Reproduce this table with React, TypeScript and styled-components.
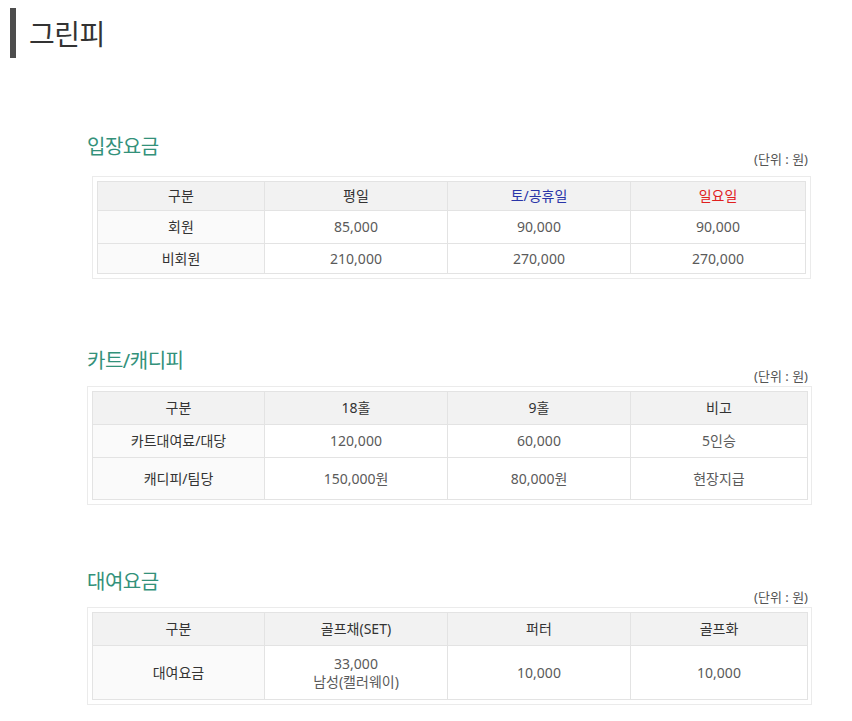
import React from 'react';
import styled, { createGlobalStyle } from 'styled-components';

const GlobalStyle = createGlobalStyle`
  html, body {
    margin: 0;
    padding: 0;
    background: #fff;
  }
  body {
    font-family: "Noto Sans", "Noto Sans CJK KR", sans-serif;
    color: #333;
  }
`;

const Page = styled.div`
  width: 852px;
  padding-bottom: 16px;
`;

const PageTitle = styled.h2`
  margin: 8px 0 0 10px;
  height: 50px;
  border-left: 6px solid #4d4d4d;
  padding-left: 13px;
  display: flex;
  align-items: center;
  font-size: 28px;
  font-weight: 400;
  color: #333;
  letter-spacing: -0.5px;
`;

const Content = styled.div`
  margin-left: 87px;
  width: 725px;
`;

const Section = styled.section<{ $top: number }>`
  margin-top: ${p => p.$top}px;
`;

const SectionTitle = styled.h3`
  margin: 0;
  font-size: 20px;
  line-height: 24px;
  font-weight: 400;
  color: #33917a;
  letter-spacing: -0.5px;
`;

const UnitNote = styled.p<{ $pull: number }>`
  margin: ${p => -p.$pull}px 4px 0 0;
  text-align: right;
  font-size: 13px;
  line-height: 18px;
  color: #555;
`;

const TableBox = styled.div<{ $gap: number; $inset?: boolean }>`
  margin-top: ${p => p.$gap}px;
  margin-left: ${p => (p.$inset ? 5 : 0)}px;
  margin-right: ${p => (p.$inset ? 1 : 0)}px;
  border: 1px solid #ebebeb;
  padding: 4px;
`;

const Table = styled.table`
  width: 100%;
  border-collapse: collapse;
  table-layout: fixed;
  font-size: 14px;
  line-height: 18px;
`;

const HeadCell = styled.th<{ $tone?: 'blue' | 'red' }>`
  background: #f2f2f2;
  border: 1px solid #e3e3e3;
  font-weight: 400;
  padding: 0;
  text-align: center;
  color: ${p => (p.$tone === 'blue' ? '#2a35a8' : p.$tone === 'red' ? '#e0201e' : '#333')};
`;

const LabelCell = styled.td`
  background: #fafafa;
  border: 1px solid #e3e3e3;
  padding: 0;
  text-align: center;
  color: #333;
`;

const ValueCell = styled.td`
  background: #fff;
  border: 1px solid #e3e3e3;
  padding: 0;
  text-align: center;
  color: #5a5a5a;
`;

const Row = styled.tr<{ $h: number }>`
  height: ${p => p.$h}px;
`;

type Head = { text: string; tone?: 'blue' | 'red' };

interface FeeTableProps {
  title: string;
  top: number;
  pull: number;
  gap: number;
  inset?: boolean;
  cols: number[];
  heads: Head[];
  headHeight: number;
  rows: { label: string; values: React.ReactNode[]; height: number }[];
}

const FeeTable: React.FC<FeeTableProps> = ({ title, top, pull, gap, inset, cols, heads, headHeight, rows }) => (
  <Section $top={top}>
    <SectionTitle>{title}</SectionTitle>
    <UnitNote $pull={pull}>(단위 : 원)</UnitNote>
    <TableBox $gap={gap} $inset={inset}>
      <Table>
        <colgroup>
          {cols.map((w, i) => (
            <col key={i} style={{ width: w }} />
          ))}
        </colgroup>
        <thead>
          <Row $h={headHeight}>
            {heads.map(h => (
              <HeadCell key={h.text} $tone={h.tone}>{h.text}</HeadCell>
            ))}
          </Row>
        </thead>
        <tbody>
          {rows.map(r => (
            <Row key={r.label} $h={r.height}>
              <LabelCell>{r.label}</LabelCell>
              {r.values.map((v, i) => (
                <ValueCell key={i}>{v}</ValueCell>
              ))}
            </Row>
          ))}
        </tbody>
      </Table>
    </TableBox>
  </Section>
);

export default function App() {
  return (
    <Page>
      <GlobalStyle />
      <PageTitle>그린피</PageTitle>
      <Content>
        <FeeTable
          title="입장요금"
          top={77}
          pull={9}
          gap={8}
          inset
          cols={[167, 183, 183, 175]}
          headHeight={29}
          heads={[{ text: '구분' }, { text: '평일' }, { text: '토/공휴일', tone: 'blue' }, { text: '일요일', tone: 'red' }]}
          rows={[
            { label: '회원', values: ['85,000', '90,000', '90,000'], height: 33 },
            { label: '비회원', values: ['210,000', '270,000', '270,000'], height: 30 },
          ]}
        />
        <FeeTable
          title="카트/캐디피"
          top={70}
          pull={6}
          gap={1}
          cols={[172, 183, 183, 177]}
          headHeight={33}
          heads={[{ text: '구분' }, { text: '18홀' }, { text: '9홀' }, { text: '비고' }]}
          rows={[
            { label: '카트대여료/대당', values: ['120,000', '60,000', '5인승'], height: 33 },
            { label: '캐디피/팀당', values: ['150,000원', '80,000원', '현장지급'], height: 42 },
          ]}
        />
        <FeeTable
          title="대여요금"
          top={65}
          pull={6}
          gap={1}
          cols={[172, 183, 183, 177]}
          headHeight={33}
          heads={[{ text: '구분' }, { text: '골프채(SET)' }, { text: '퍼터' }, { text: '골프화' }]}
          rows={[
            {
              label: '대여요금',
              values: [
                <>
                  33,000
                  <br />
                  남성(캘러웨이)
                </>,
                '10,000',
                '10,000',
              ],
              height: 54,
            },
          ]}
        />
      </Content>
    </Page>
  );
}
